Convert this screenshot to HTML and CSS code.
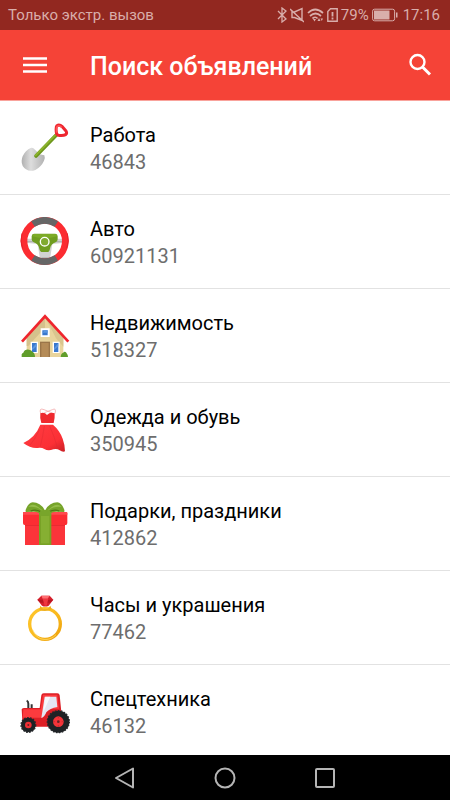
FILE: index.html
```html
<!DOCTYPE html>
<html lang="ru">
<head>
  <meta charset="UTF-8">
  <meta name="viewport" content="width=device-width, initial-scale=1.0">
  <title>Поиск объявлений</title>
  <link rel="stylesheet" href="styles.css">
</head>
<body>

  <!-- Status bar -->
  <div class="status-bar">
    <span class="carrier">Только экстр. вызов</span>
    <div class="status-icons">
      <svg width="10" height="16" viewBox="0 0 10 16"><path d="M1 4l8 8-4 3V1l4 3-8 8" fill="none" stroke="currentColor" stroke-width="1.3"/></svg>
      <svg class="mute" width="14" height="16" viewBox="0 0 14 16"><path d="M2 5h2.500l7.500-3.500v12L4.500 10.500H2zM0 2l14 13" fill="none" stroke="currentColor" stroke-width="1.4"/></svg>
      <svg class="wifi" width="17" height="16" viewBox="0 0 17 16"><path d="M1 6q7-7 15 0M3 9q5.500-5 11 0M5.500 11.500q3-2.500 5 0" fill="none" stroke="currentColor" stroke-width="1.7"/><path d="M6 12h3l-1.500 2.500zM10.500 14l1.500-3 1.500 3zM13.500 11.500h2.500l-1.200 2.500z" fill="currentColor"/></svg>
      <svg class="sim" width="11" height="16" viewBox="0 0 11 16"><path d="M3.500 1.700h6.700v12.600H.8V4.500z" fill="none" stroke="currentColor" stroke-width="1.400"/><path d="M5.500 5v4.500M5.500 10.500v2" stroke="currentColor" stroke-width="1.800"/></svg>
      <span class="percent">79%</span>
      <svg class="battery" width="26" height="14" viewBox="0 0 26 14"><rect x=".6" y="1.200" width="22" height="11.600" rx="2" fill="none" stroke="currentColor" stroke-width="1"/><path d="M2 2.500h15.500v9H2zM24 4.500h1.500v5H24z" fill="currentColor"/></svg>
      <span class="clock">17:16</span>
    </div>
  </div>

  <!-- Toolbar -->
  <header class="toolbar">
    <button class="icon-btn" aria-label="Меню">
      <svg width="24" height="24" viewBox="0 0 24 24"><path d="M0 5.500h24M0 12h24M0 18.500h24" stroke="currentColor" stroke-width="2.400"/></svg>
    </button>
    <h1>Поиск объявлений</h1>
    <button class="icon-btn" aria-label="Поиск">
      <svg width="24" height="24" viewBox="0 0 24 24"><circle cx="9.500" cy="9" r="7" fill="none" stroke="currentColor" stroke-width="2.400"/><path d="M14.500 14l7.500 7.500" stroke="currentColor" stroke-width="3"/></svg>
    </button>
  </header>

  <!-- Categories -->
  <ul class="categories">
    <li>
      <a href="#work">
        <svg class="icon" viewBox="30 39 150 150">
          <defs><linearGradient id="steel"><stop offset="0" stop-color="#b0b0b0"/><stop offset=".4" stop-color="#ddd"/><stop offset="1" stop-color="#b2b2b2"/></linearGradient></defs>
          <path d="M62 114q7-2 13 5l14 14 14 3q3 6-1 16-8 18-26 28-16 6-28-2-14-10-13-26 1-15 13-28 7-8 14-10z" fill="url(#steel)"/>
          <path d="M78 138l61-63" stroke="#6d961c" stroke-width="11" stroke-linecap="round"/>
          <path d="M77 136l61-63" stroke="#8db52c" stroke-width="5" stroke-linecap="round"/>
          <path d="M140 72q-4-20 1-25 7-5 16 3l11 13q4 7-1 11-7 4-22 2z" fill="#fff" stroke="#ee262f" stroke-width="9" stroke-linejoin="round"/>
          <path d="M140 68q-2-14 2-19 6-4 13 3" fill="none" stroke="#ff5357" stroke-width="5"/>
        </svg>
        <span class="text"><span class="name">Работа</span><span class="count">46843</span></span>
      </a>
    </li>
    <li>
      <a href="#auto">
        <svg class="icon" viewBox="30 33 150 150">
          <path d="M45 98h120v12l-38 4-8 52H91l-8-52-38-4z" fill="#d2d2d2"/>
          <path d="M49 107h25M137 107h25M94 156h22" stroke="#b3b3b3" stroke-width="4"/>
          <circle cx="104" cy="105" r="62" fill="none" stroke="#fb2c31" stroke-width="20"/>
          <path d="M69 54q35-22 70 0M69 156q35 22 70 0" fill="none" stroke="#666" stroke-width="20"/>
          <path d="M36 82q-7 24 2 45M172 82q7 24-2 45" fill="none" stroke="#e3222a" stroke-width="3"/>
          <path d="M72 83h64q7 1 7 8v9q0 6-6 9-15 5-17 19-2 10-8 10H97q-7 0-9-10-2-14-17-19-6-3-6-9v-9q0-7 7-8z" fill="#709d20"/>
          <path d="M72 84h64q5 1 5 7-36 12-74 0 0-6 5-7z" fill="#7dab27"/>
          <circle cx="104" cy="107" r="13" fill="#81aa30" stroke="#fff" stroke-width="4"/>
        </svg>
        <span class="text"><span class="name">Авто</span><span class="count">60921131</span></span>
      </a>
    </li>
    <li>
      <a href="#realty">
        <svg class="icon" viewBox="30 33 150 150">
          <path d="M50 111l55-58 55 58v60H50z" fill="#e8d49c"/>
          <path d="M50 111l55-58v30l-32 35-18 20h-5z" fill="#d5c18c"/>
          <path d="M105 53l55 58v29l-22-25-19-38z" fill="#d9c58e"/>
          <path d="M36 125l69-76 70 76" fill="none" stroke="#ef262d" stroke-width="8"/>
          <path d="M92 85h27v26H92zM62 125h22v34H62zM128 125h21v34h-21z" fill="#fff"/>
          <path d="M97 91h16v15H97zM66 129h14v27H66zM132 129h13v27h-13z" fill="#3978ce"/>
          <path d="M97 98l7-7h9v7zM66 145l14-16v10l-14 12zM132 145l13-16v10l-13 12z" fill="#5b95df"/>
          <path d="M90 125h30v46H90z" fill="#9a7549"/>
          <path d="M94 129h22v42H94z" fill="#b48b57"/>
          <path d="M35 171v-8q2-4 5-5 4-11 17-9 9 1 10 6 8 4 8 16zM152 171q1-11 7-12 5-7 10-1 5 6 5 13z" fill="#609d2a"/>
        </svg>
        <span class="text"><span class="name">Недвижимость</span><span class="count">518327</span></span>
      </a>
    </li>
    <li>
      <a href="#clothes">
        <svg class="icon" viewBox="30 27 150 150">
          <defs><linearGradient id="skirt" x2="1" y2="1"><stop offset="0" stop-color="#ff3c42"/><stop offset=".7" stop-color="#fb3035"/><stop offset="1" stop-color="#c91f25"/></linearGradient></defs>
          <path d="M92 53q-6-19 10-12l23 9M135 53q5-19-8-12l-24 9" fill="none" stroke="#f29a9c" stroke-width="2"/>
          <path d="M91 52q12-5 20 5 10-10 23-5 1 15-3 29H94q-5-16-3-29z" fill="#ef292e"/>
          <path d="M91 86h38q20 17 29 42 7 19 7 38-7 3-17-4-8-5-18-2-16 6-27-1-8-5-20-3-21 2-43-15 36-17 51-55z" fill="url(#skirt)"/>
          <path d="M88 102q-15 31-28 45M103 90q-5 35-12 61M119 90q15 34 23 64" fill="none" stroke="#dc2930" stroke-width="2" opacity=".6"/>
        </svg>
        <span class="text"><span class="name">Одежда и обувь</span><span class="count">350945</span></span>
      </a>
    </li>
    <li>
      <a href="#gifts">
        <svg class="icon" viewBox="30 27 150 150">
          <path d="M45 100h120v65H45z" fill="#fb343a"/>
          <path d="M39 68q0-2 3-2h126q4 0 4 3v30q0 6-5 6H44q-5 0-5-6z" fill="#fc2d33"/>
          <path d="M39 69q0-3 3-3h126q4 0 4 3v5H39z" fill="#ff4a4e"/>
          <path d="M45 105h120v3H45z" fill="#e92a31"/>
          <path d="M87 66h37v99H87z" fill="#78a226"/>
          <path d="M93 76h25v84H93z" fill="#86af32"/>
          <path d="M95 77q-8-12-24-12l-22 1q-5-1 0-11 7-17 19-18 24 0 37 25 13-25 37-25 12 1 19 18 5 10 0 11l-22-1q-16 0-24 12z" fill="#76a42a"/>
          <path d="M55 51q10-10 21-5 15 7 25 20-18-18-46-15zM155 51q-10-10-21-5-15 7-25 20 18-18 46-15z" fill="#94bd49"/>
          <path d="M62 63q15-6 30 2M148 63q-15-6-30 2" fill="none" stroke="#4d7915" stroke-width="4"/>
          <path d="M91 62q15-4 30 0l3 15H88z" fill="#78a52b"/>
        </svg>
        <span class="text"><span class="name">Подарки, праздники</span><span class="count">412862</span></span>
      </a>
    </li>
    <li>
      <a href="#jewelry">
        <svg class="icon" viewBox="30 27 150 150">
          <defs><linearGradient id="gold" x2="1" y2="1"><stop offset="0" stop-color="#ffc72e"/><stop offset=".55" stop-color="#f9b91d"/><stop offset="1" stop-color="#eda00c"/></linearGradient></defs>
          <circle cx="105" cy="120" r="46" fill="none" stroke="url(#gold)" stroke-width="10"/>
          <path d="M91 65l8 10h14l8-10 4 11q-20 10-37 1z" fill="#eeb020"/>
          <path d="M68 137q10 28 37 30 20-1 33-15" fill="none" stroke="#ffe27c" stroke-width="2"/>
          <path d="M94 35h25l11 12-14 18q-10 5-20 0L82 47z" fill="#d7202c"/>
          <path d="M94 35h25l-6 9H98z" fill="#ff6e71"/>
          <path d="M82 47h48l-10 9H92z" fill="#b91723"/>
          <path d="M98 44h17l-5 21h-6z" fill="#ee3640"/>
        </svg>
        <span class="text"><span class="name">Часы и украшения</span><span class="count">77462</span></span>
      </a>
    </li>
    <li>
      <a href="#machinery">
        <svg class="icon" viewBox="30 21 150 150">
          <path d="M50 62q5 2 5 9v14M65 73v14" fill="none" stroke="#343536" stroke-width="6"/>
          <path d="M35 88q2-4 8-4h46l5-38q1-6 7-6h41q6 0 7 6l5 49-20 45H38z" fill="#dc1f26"/>
          <path d="M40 88h52l7-44h43l5 42H108l-10 27H38z" fill="#fc3b3e"/>
          <path d="M104 50h35l3 31q-23 4-33 16-5 14-15 17z" fill="#e4e6f2"/>
          <path d="M106 50h15L99 98z" fill="#fff" opacity=".7"/>
          <circle cx="145" cy="125" r="33" fill="#1e2225" stroke="#26292c" stroke-width="4" stroke-dasharray="5 4"/>
          <circle cx="145" cy="125" r="16" fill="#f33439"/><circle cx="145" cy="125" r="4" fill="#642025"/>
          <path d="M145 109v6M145 135v6M129 125h6M155 125h6" stroke="#c92b31" stroke-width="3"/>
          <circle cx="55" cy="135" r="22" fill="#1e2225" stroke="#26292c" stroke-width="4" stroke-dasharray="5 4"/>
          <circle cx="55" cy="135" r="10" fill="#ef3036"/><circle cx="55" cy="135" r="3" fill="#642025"/>
        </svg>
        <span class="text"><span class="name">Спецтехника</span><span class="count">46132</span></span>
      </a>
    </li>
  </ul>

  <!-- System navigation -->
  <nav class="nav-bar">
    <button aria-label="Назад"><svg width="22" height="22" viewBox="0 0 22 22"><path d="M19 1.500v19L2 11z"/></svg></button>
    <button aria-label="Домой"><svg width="22" height="22" viewBox="0 0 22 22"><circle cx="11" cy="11" r="9.500"/></svg></button>
    <button aria-label="Недавние"><svg width="22" height="22" viewBox="0 0 22 22"><rect x="2" y="2" width="18" height="18" rx="1"/></svg></button>
  </nav>

</body>
</html>
```
FILE: styles.css
```css
* {
  box-sizing: border-box;
}

body {
  font-family: Roboto, sans-serif;
  background-color: #fff;
  display: flex;
  flex-direction: column;
  height: 100vh;
  margin: 0;
}

svg {
  display: block;
  flex-shrink: 0;
}

button {
  background: none;
  border: none;
  padding: 0;
  color: inherit;
  cursor: pointer;
}

.status-bar {
  display: flex;
  align-items: center;
  justify-content: space-between;
  flex-shrink: 0;
  height: 30px;
  padding: 0 10px 0 8px;
  background-color: #922820;
  color: #d9aeab;
  font-size: 15px;
  line-height: 30px;
}

.status-icons {
  display: flex;
  align-items: center;
  gap: 3px;
}

.battery {
  margin-right: 2px;
}

.toolbar {
  display: flex;
  align-items: center;
  flex-shrink: 0;
  height: 71px;
  padding: 0 18px 0 23px;
  background-color: #f54337;
  border-bottom: 1px solid #f9a39c;
  color: #fff;
}

.toolbar h1 {
  flex: 1;
  margin: 0 0 0 43px;
  padding-top: 4px;
  font-size: 25px;
  font-weight: 500;
  line-height: 32px;
}

.categories {
  flex: 1;
  min-height: 0;
  margin: 0;
  padding: 0;
  overflow: hidden;
  list-style: none;
}

.categories li {
  border-bottom: 1px solid #e2e2e2;
}

.categories a {
  display: flex;
  align-items: center;
  gap: 20px;
  height: 93px;
  padding: 0 20px;
  color: #000;
  text-decoration: none;
}

.icon {
  width: 50px;
  height: 50px;
}

.text {
  display: flex;
  flex-direction: column;
  padding-top: 2px;
  font-size: 20px;
  line-height: 27px;
}

.count {
  color: #6d6d6d;
}

.nav-bar {
  display: flex;
  align-items: center;
  justify-content: center;
  gap: 78px;
  flex-shrink: 0;
  height: 45px;
  background-color: #000;
}

.nav-bar svg {
  fill: none;
  stroke: #b5b5b5;
  stroke-width: 2;
  stroke-linejoin: round;
}
```
